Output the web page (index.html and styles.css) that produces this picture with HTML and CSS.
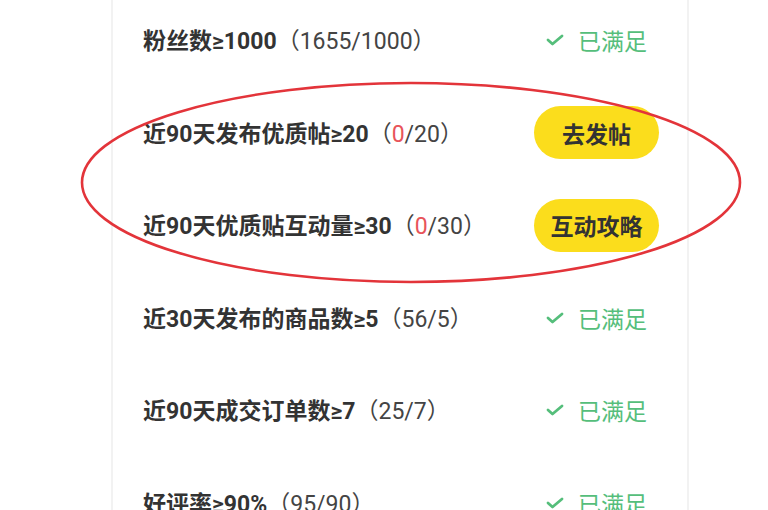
FILE: index.html
```html
<!DOCTYPE html>
<html lang="zh-CN">
<head>
<meta charset="utf-8">
<title>任务条件</title>
<link rel="stylesheet" href="styles.css">
</head>
<body>
<div class="page">
  <div class="card">
    <div class="row">
      <div class="label"><b>粉丝数≥1000</b><span class="prog">（1655/1000）</span></div>
      <div class="side"><span class="done"><svg class="check" viewBox="0 0 18 12" width="18" height="12"><polyline points="2,6 6.5,10 16,2" /></svg>已满足</span></div>
    </div>
    <div class="row">
      <div class="label"><b>近90天发布优质帖≥20</b><span class="prog">（<span class="zero">0</span>/20）</span></div>
      <div class="side"><span class="btn">去发帖</span></div>
    </div>
    <div class="row">
      <div class="label"><b>近90天优质贴互动量≥30</b><span class="prog">（<span class="zero">0</span>/30）</span></div>
      <div class="side"><span class="btn">互动攻略</span></div>
    </div>
    <div class="row">
      <div class="label"><b>近30天发布的商品数≥5</b><span class="prog">（56/5）</span></div>
      <div class="side"><span class="done"><svg class="check" viewBox="0 0 18 12" width="18" height="12"><polyline points="2,6 6.5,10 16,2" /></svg>已满足</span></div>
    </div>
    <div class="row">
      <div class="label"><b>近90天成交订单数≥7</b><span class="prog">（25/7）</span></div>
      <div class="side"><span class="done"><svg class="check" viewBox="0 0 18 12" width="18" height="12"><polyline points="2,6 6.5,10 16,2" /></svg>已满足</span></div>
    </div>
    <div class="row">
      <div class="label"><b>好评率≥90%</b><span class="prog">（95/90）</span></div>
      <div class="side"><span class="done"><svg class="check" viewBox="0 0 18 12" width="18" height="12"><polyline points="2,6 6.5,10 16,2" /></svg>已满足</span></div>
    </div>
  </div>
  <svg class="mark" width="768" height="510" viewBox="0 0 768 510">
    <ellipse cx="411" cy="182.5" rx="329" ry="99.5" />
  </svg>
</div>
</body>
</html>
```

FILE: styles.css
```css
html, body {
  margin: 0;
  padding: 0;
  background: #ffffff;
}
body {
  width: 768px;
  height: 510px;
  overflow: hidden;
  font-family: Roboto, "Noto Sans CJK SC", sans-serif;
  color: #333333;
}
.page {
  position: relative;
  width: 768px;
  height: 510px;
  overflow: hidden;
}
.card {
  margin: -6.3px 0 0 111px;
  width: 574px;
  border-left: 2px solid #f2f2f2;
  border-right: 2px solid #f2f2f2;
  background: #ffffff;
  display: flex;
  flex-direction: column;
}
.row {
  height: 92.6px;
  display: flex;
  align-items: center;
  justify-content: space-between;
  padding: 0 28px 0 30px;
}
.label {
  font-size: 23px;
  line-height: 30px;
  padding-top: 4px;
  color: #333333;
  white-space: nowrap;
}
.label b {
  font-weight: 700;
  color: #333333;
}
.prog {
  font-weight: 400;
  color: #444444;
}
.zero {
  color: #e8545a;
}
.side {
  width: 125px;
  display: flex;
  justify-content: center;
  align-items: center;
}
.done {
  display: flex;
  align-items: center;
  gap: 14px;
  font-size: 23px;
  color: #55be7b;
}
.check {
  display: block;
  fill: none;
  stroke: #55be7b;
  stroke-width: 2.8;
  stroke-linecap: round;
  stroke-linejoin: round;
}
.btn {
  width: 125px;
  height: 53px;
  border-radius: 27px;
  background: #fbdd1c;
  color: #333333;
  font-size: 23px;
  font-weight: 700;
  display: flex;
  align-items: center;
  justify-content: center;
}
.mark {
  position: absolute;
  left: 0;
  top: 0;
  pointer-events: none;
}
.mark ellipse {
  fill: none;
  stroke: #e3343a;
  stroke-width: 2.6;
}
```
